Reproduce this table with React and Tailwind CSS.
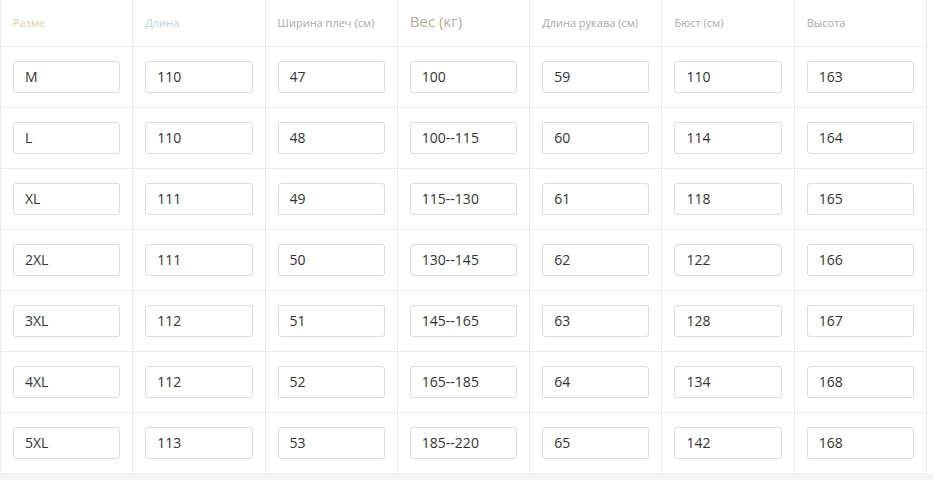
import React from 'react';

const headers = [
  { label: 'Разме', cls: 'text-[11px] text-[#e3cfa3]' },
  { label: 'Длина', cls: 'text-[11px] text-[#c3d0de]' },
  { label: 'Ширина плеч (см)', cls: 'text-[11px] text-[#a9a9a9]' },
  { label: 'Вес (кг)', cls: 'text-[15px] text-[#b3aa9c]' },
  { label: 'Длина рукава (см)', cls: 'text-[11px] text-[#a9a9a9]' },
  { label: 'Бюст (см)', cls: 'text-[11px] text-[#a9a9a9]' },
  { label: 'Высота', cls: 'text-[11px] text-[#a9a9a9]' },
];

const rows = [
  ['M', '110', '47', '100', '59', '110', '163'],
  ['L', '110', '48', '100--115', '60', '114', '164'],
  ['XL', '111', '49', '115--130', '61', '118', '165'],
  ['2XL', '111', '50', '130--145', '62', '122', '166'],
  ['3XL', '112', '51', '145--165', '63', '128', '167'],
  ['4XL', '112', '52', '165--185', '64', '134', '168'],
  ['5XL', '113', '53', '185--220', '65', '142', '168'],
];

export default function App() {
  return (
    <div className="min-h-[480px] bg-[#f4f4f4] font-['Open_Sans',sans-serif]">
      <div className="bg-white">
        <table className="table-fixed w-[927px] border-collapse">
          <thead>
            <tr>
              {headers.map((h, i) => (
                <th
                  key={i}
                  className="h-[46px] border border-t-0 border-[#ececec] px-[12px] pb-[3px] text-left font-normal align-middle whitespace-nowrap"
                >
                  <span className={h.cls}>{h.label}</span>
                </th>
              ))}
            </tr>
          </thead>
          <tbody>
            {rows.map((row, r) => (
              <tr key={r}>
                {row.map((v, c) => (
                  <td key={c} className="h-[61px] border border-[#ececec] px-[12px] align-middle">
                    <input
                      readOnly
                      value={v}
                      className="w-full h-[32px] border border-[#dcdcdc] rounded-[3px] pl-[11px] text-[14px] text-[#333] bg-white outline-none font-['Open_Sans',sans-serif]"
                    />
                  </td>
                ))}
              </tr>
            ))}
          </tbody>
        </table>
      </div>
    </div>
  );
}
